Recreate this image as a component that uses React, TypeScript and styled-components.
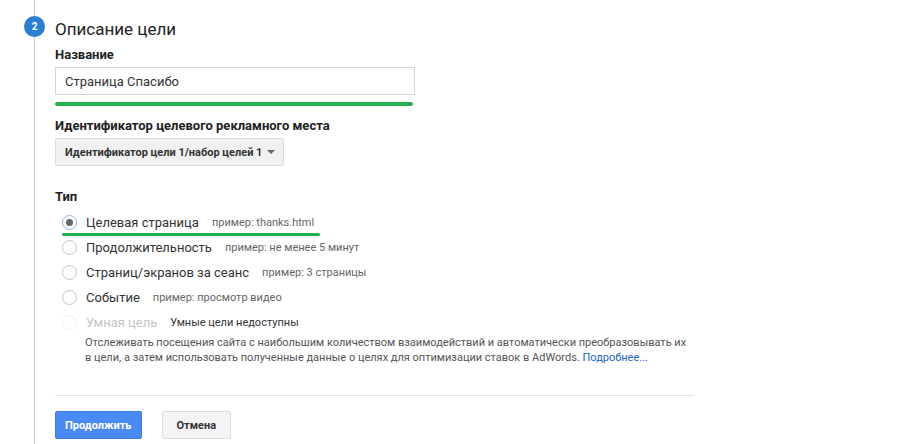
import React from "react";
import styled, { createGlobalStyle } from "styled-components";

const Global = createGlobalStyle`
  html, body { margin: 0; padding: 0; background: #fff; }
  body { font-family: Roboto, "Noto Sans", Arial, sans-serif; color: #333; }
`;

const Page = styled.div`
  display: flex;
  min-height: 444px;
  width: 909px;
  overflow: hidden;
`;

const Rail = styled.div`
  width: 21px;
  padding-left: 24px;
  display: flex;
  flex-direction: column;
  align-items: center;
`;

const RailLine = styled.div<{ $h?: number }>`
  width: 1px;
  background: #c8c8c8;
  ${(p) => (p.$h ? `height: ${p.$h}px; flex: none;` : `flex: 1;`)}
`;

const Badge = styled.div`
  width: 21px;
  height: 21px;
  border-radius: 50%;
  background: #2a7ed3;
  color: #fff;
  font-size: 10px;
  font-weight: 700;
  display: flex;
  align-items: center;
  justify-content: center;
  flex: none;
`;

const Content = styled.div`
  padding: 18px 0 0 10px;
  display: flex;
  flex-direction: column;
  width: 640px;
`;

const Title = styled.div`
  font-size: 17px;
  line-height: 22px;
  color: #222;
`;

const Label = styled.div<{ $mt: number }>`
  font-size: 13px;
  line-height: 16px;
  font-weight: 700;
  color: #222;
  margin-top: ${(p) => p.$mt}px;
`;

const TextInput = styled.div`
  margin-top: 4px;
  width: 360px;
  height: 28px;
  box-sizing: border-box;
  border: 1px solid #d4d4d4;
  padding-left: 9px;
  display: flex;
  align-items: center;
  font-size: 13px;
  color: #333;
`;

const Highlight = styled.div`
  margin-top: 7px;
  width: 358px;
  height: 4px;
  border-radius: 2px;
  background: #22b04b;
`;

const Dropdown = styled.div`
  margin-top: 4px;
  width: 229px;
  height: 28px;
  box-sizing: border-box;
  border: 1px solid #dcdcdc;
  border-radius: 2px;
  background: #f1f1f1;
  display: flex;
  align-items: center;
  padding: 0 8px 0 9px;
  justify-content: space-between;
  font-size: 11px;
  font-weight: 700;
  color: #333;
`;

const Caret = styled.span`
  width: 0;
  height: 0;
  border-left: 4px solid transparent;
  border-right: 4px solid transparent;
  border-top: 4px solid #666;
`;

const RadioList = styled.div`
  margin-top: 5px;
  display: flex;
  flex-direction: column;
`;

const RadioRow = styled.div`
  position: relative;
  height: 25px;
  display: flex;
  align-items: center;
  padding-left: 7px;
`;

const RadioCircle = styled.span<{ $checked?: boolean; $disabled?: boolean }>`
  width: 15px;
  height: 15px;
  box-sizing: border-box;
  border-radius: 50%;
  border: 1px solid
    ${(p) => (p.$checked ? "#8ab4f0" : p.$disabled ? "#efefef" : "#c6c6c6")};
  background: #fff;
  display: flex;
  align-items: center;
  justify-content: center;
  flex: none;
  &::after {
    content: "";
    width: 7px;
    height: 7px;
    border-radius: 50%;
    background: #666;
    display: ${(p) => (p.$checked ? "block" : "none")};
  }
`;

const RadioLabel = styled.span<{ $disabled?: boolean }>`
  margin-left: 9px;
  font-size: 13px;
  color: ${(p) => (p.$disabled ? "#c4c4c4" : "#333")};
`;

const Hint = styled.span<{ $dark?: boolean }>`
  margin-left: 13px;
  font-size: 11px;
  color: ${(p) => (p.$dark ? "#333" : "#666")};
`;

const Underline = styled.div`
  position: absolute;
  left: 7px;
  top: 23px;
  width: 258px;
  height: 3px;
  border-radius: 2px;
  background: #22b04b;
`;

const Description = styled.p`
  margin: 0;
  padding-left: 30px;
  font-size: 11px;
  line-height: 15px;
  color: #555;
`;

const Link = styled.a`
  color: #1a64c4;
  text-decoration: none;
`;

const Divider = styled.div`
  margin-top: 30px;
  height: 1px;
  width: 639px;
  background: #e2e2e2;
`;

const Buttons = styled.div`
  margin-top: 15px;
  display: flex;
  gap: 20px;
`;

const Button = styled.button<{ $primary?: boolean }>`
  height: 28px;
  box-sizing: border-box;
  padding: 0 ${(p) => (p.$primary ? 9 : 14)}px;
  border-radius: 2px;
  font-family: inherit;
  font-size: 11px;
  font-weight: 700;
  border: 1px solid ${(p) => (p.$primary ? "#3b7ae3" : "#dcdcdc")};
  background: ${(p) => (p.$primary ? "#4a8af4" : "#f4f4f4")};
  color: ${(p) => (p.$primary ? "#fff" : "#333")};
`;

const options = [
  { label: "Целевая страница", hint: "пример: thanks.html", checked: true },
  { label: "Продолжительность", hint: "пример: не менее 5 минут" },
  { label: "Страниц/экранов за сеанс", hint: "пример: 3 страницы" },
  { label: "Событие", hint: "пример: просмотр видео" },
];

export default function App() {
  return (
    <>
      <Global />
      <Page>
        <Rail>
          <RailLine $h={16} />
          <Badge>2</Badge>
          <RailLine />
        </Rail>
        <Content>
          <Title>Описание цели</Title>
          <Label $mt={7}>Название</Label>
          <TextInput>Страница Спасибо</TextInput>
          <Highlight />
          <Label $mt={12}>Идентификатор целевого рекламного места</Label>
          <Dropdown>
            Идентификатор цели 1/набор целей 1
            <Caret />
          </Dropdown>
          <Label $mt={23}>Тип</Label>
          <RadioList>
            {options.map((o) => (
              <RadioRow key={o.label}>
                <RadioCircle $checked={o.checked} />
                <RadioLabel>{o.label}</RadioLabel>
                <Hint>{o.hint}</Hint>
                {o.checked && <Underline />}
              </RadioRow>
            ))}
            <RadioRow>
              <RadioCircle $disabled />
              <RadioLabel $disabled>Умная цель</RadioLabel>
              <Hint $dark>Умные цели недоступны</Hint>
            </RadioRow>
          </RadioList>
          <Description>
            Отслеживать посещения сайта с наибольшим количеством взаимодействий и автоматически преобразовывать их
            в цели, а затем использовать полученные данные о целях для оптимизации ставок в AdWords.{" "}
            <Link href="#">Подробнее...</Link>
          </Description>
          <Divider />
          <Buttons>
            <Button $primary>Продолжить</Button>
            <Button>Отмена</Button>
          </Buttons>
        </Content>
      </Page>
    </>
  );
}
